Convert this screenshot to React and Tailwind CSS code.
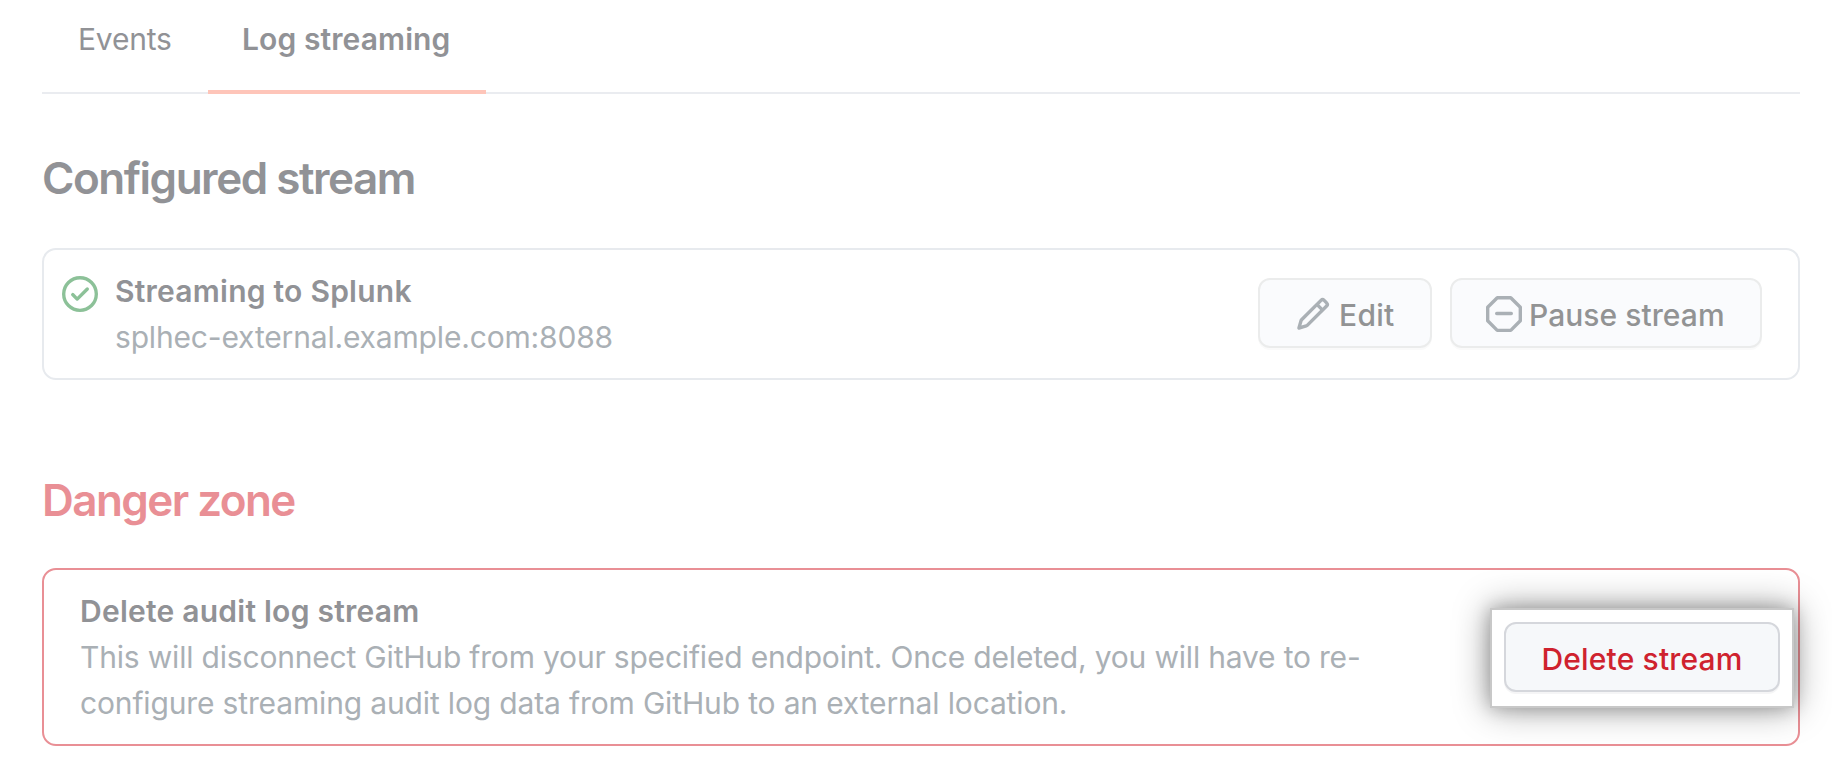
function Icon({ size, className, children }) {
  return (
    <svg viewBox="0 0 16 16" width={size} height={size} fill="currentColor" className={className} aria-hidden="true">
      {children}
    </svg>
  );
}

function CheckCircleIcon() {
  return (
    <Icon size={36} className="shrink-0 text-[#8cc198]">
      <path fillRule="evenodd" d="M1.5 8a6.5 6.5 0 1 1 13 0 6.5 6.5 0 0 1-13 0ZM0 8a8 8 0 1 1 16 0A8 8 0 0 1 0 8Zm11.78-1.72a.75.75 0 0 0-1.06-1.06L6.75 9.19 5.28 7.72a.75.75 0 0 0-1.06 1.06l2 2a.75.75 0 0 0 1.06 0l4.5-4.5Z" />
    </Icon>
  );
}

function PencilIcon() {
  return (
    <Icon size={36} className="shrink-0 text-[#aab0b5]">
      <path fillRule="evenodd" d="M11.013 1.427a1.75 1.75 0 0 1 2.474 0l1.086 1.086a1.75 1.75 0 0 1 0 2.474l-8.61 8.61c-.21.21-.47.364-.756.445l-3.251.93a.75.75 0 0 1-.927-.928l.929-3.25a1.75 1.75 0 0 1 .445-.758l8.61-8.61Zm1.414 1.06a.25.25 0 0 0-.354 0L10.811 3.75l1.439 1.44 1.263-1.263a.25.25 0 0 0 0-.354l-1.086-1.086ZM11.189 6.25 9.75 4.81l-6.286 6.287a.25.25 0 0 0-.064.108l-.558 1.953 1.953-.558a.249.249 0 0 0 .108-.064l6.286-6.286Z" />
    </Icon>
  );
}

function NoEntryIcon() {
  return (
    <Icon size={36} className="shrink-0 text-[#aab0b5]">
      <path fillRule="evenodd" d="M4.47.22A.75.75 0 0 1 5 0h6a.75.75 0 0 1 .53.22l4.25 4.25c.141.14.22.331.22.53v6a.75.75 0 0 1-.22.53l-4.25 4.25A.75.75 0 0 1 11 16H5a.75.75 0 0 1-.53-.22L.22 11.53A.75.75 0 0 1 0 11V5a.75.75 0 0 1 .22-.53L4.47.22Zm.84 1.28L1.5 5.31v5.38l3.81 3.81h5.38l3.81-3.81V5.31L10.69 1.5H5.31ZM4 7.75A.75.75 0 0 1 4.75 7h6.5a.75.75 0 0 1 0 1.5h-6.5A.75.75 0 0 1 4 7.75Z" />
    </Icon>
  );
}

export default function App() {
  return (
    <main className="flex h-[784px] w-[1832px] flex-col overflow-hidden bg-white pl-[42px] pr-8 font-['Inter','Liberation_Sans',sans-serif] text-[30px] leading-[46px] text-[#919296]">
      <nav className="flex h-[94px] shrink-0 shadow-[inset_0_-2px_0_#eaecf0]">
        <a className="w-[166px] whitespace-nowrap pl-9 pt-4 tracking-[-0.2px]">Events</a>
        <a className="w-[278px] whitespace-nowrap border-b-4 border-[#fec5b9] pl-[34px] pt-4 font-semibold tracking-[0.1px]">Log streaming</a>
      </nav>

      <h2 className="mt-[54px] whitespace-nowrap text-[44px] font-semibold leading-[60px] tracking-[-1.48px]">Configured stream</h2>

      <section className="mt-10 flex h-[132px] shrink-0 items-center rounded-[14px] border-2 border-[#e7eaee] pl-[18px] pr-9">
        <div className="flex flex-1 gap-[17px]">
          <div className="pt-2"><CheckCircleIcon /></div>
          <div>
            <h3 className="whitespace-nowrap font-semibold tracking-[0.24px]">Streaming to Splunk</h3>
            <p className="whitespace-nowrap tracking-[-0.17px] text-[#aab0b5]">splhec-external.example.com:8088</p>
          </div>
        </div>
        <div className="flex gap-[18px] pb-0.5">
          <button className="flex h-[70px] w-[174px] items-center rounded-xl border-2 border-[#ebecec] bg-[#fafbfd] pl-[35px] pt-0.5 font-medium text-[#929394] shadow-[0_2px_0_#fafafa]">
            <PencilIcon />
            <span className="ml-2 whitespace-nowrap pt-0.5 tracking-[0.3px]">Edit</span>
          </button>
          <button className="flex h-[70px] w-[312px] items-center rounded-xl border-2 border-[#ebecec] bg-[#fafbfd] pl-[34px] pt-0.5 font-medium text-[#929394] shadow-[0_2px_0_#fafafa]">
            <NoEntryIcon />
            <span className="ml-[7px] whitespace-nowrap pt-0.5 tracking-[0.05px]">Pause stream</span>
          </button>
        </div>
      </section>

      <h2 className="mt-[90px] whitespace-nowrap text-[44px] font-semibold leading-[60px] tracking-[-1.55px] text-[#e98f95]">Danger zone</h2>

      <section className="mt-[38px] flex h-[178px] shrink-0 items-center justify-between rounded-[14px] border-2 border-[#e98f95] pl-9 pr-1">
        <div>
          <h3 className="whitespace-nowrap font-semibold tracking-[0.24px]">Delete audit log stream</h3>
          <p className="whitespace-nowrap tracking-[-0.19px] text-[#aab0b5]">
            This will disconnect GitHub from your specified endpoint. Once deleted, you will have to re-
            <br />
            <span className="tracking-[-0.15px]">configure streaming audit log data from GitHub to an external location.</span>
          </p>
        </div>
        <div className="mt-0.5 flex h-[100px] w-[304px] items-center justify-center border-2 border-[#c8c8c8] bg-white pb-0.5 shadow-[0_0_36px_rgba(0,0,0,0.4),0_0_16px_rgba(0,0,0,0.22)]">
          <button className="h-[70px] w-[276px] whitespace-nowrap rounded-xl border-2 border-[#d5d7dc] bg-[#f6f8fa] pt-1 font-medium tracking-[0.15px] text-[#cf222e] shadow-[0_2px_0_#f5f5f6]">
            Delete stream
          </button>
        </div>
      </section>
    </main>
  );
}
